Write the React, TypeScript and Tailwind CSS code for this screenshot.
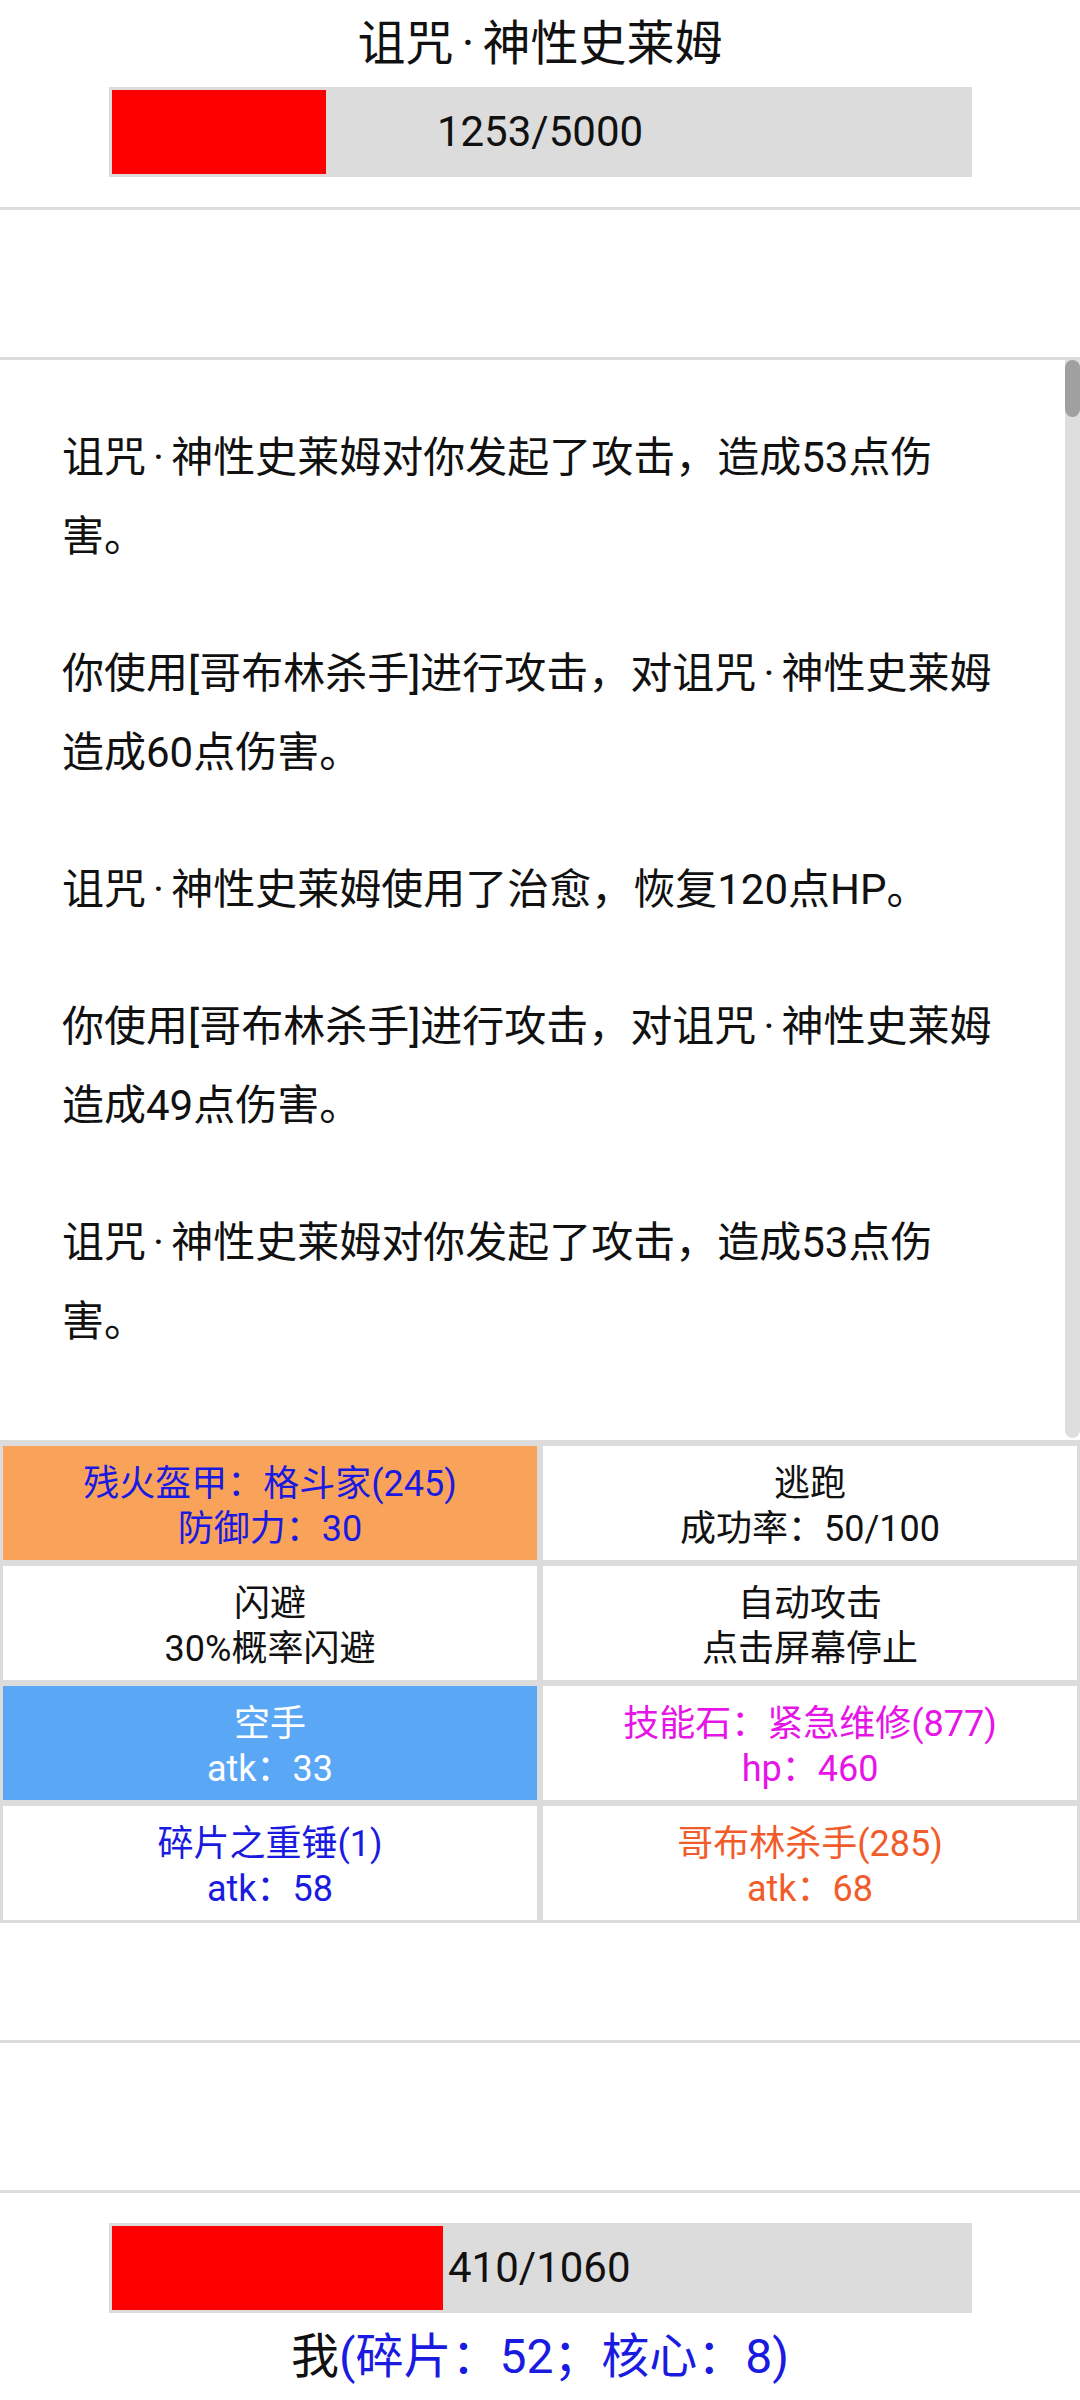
import React from "react";

function Dot() {
  return <span className="inline-block w-[0.6em] text-center">·</span>;
}

const NAME = (
  <>
    诅咒
    <Dot />
    神性史莱姆
  </>
);

const logs: React.ReactNode[] = [
  <>
    {NAME}对你发起了攻击，造成53点伤
    <br />
    害。
  </>,
  <>你使用[哥布林杀手]进行攻击，对{NAME}造成60点伤害。</>,
  <>{NAME}使用了治愈，恢复120点HP。</>,
  <>你使用[哥布林杀手]进行攻击，对{NAME}造成49点伤害。</>,
  <>
    {NAME}对你发起了攻击，造成53点伤
    <br />
    害。
  </>,
];

type Cell = { l1: string; l2: string; bg: string; fg: string };

const cells: Cell[] = [
  { l1: "残火盔甲：格斗家(245)", l2: "防御力：30", bg: "bg-[#f9a35a]", fg: "text-[#1a1ae0]" },
  { l1: "逃跑", l2: "成功率：50/100", bg: "bg-white", fg: "text-[#111]" },
  { l1: "闪避", l2: "30%概率闪避", bg: "bg-white", fg: "text-[#111]" },
  { l1: "自动攻击", l2: "点击屏幕停止", bg: "bg-white", fg: "text-[#111]" },
  { l1: "空手", l2: "atk：33", bg: "bg-[#5aa8f5]", fg: "text-white" },
  { l1: "技能石：紧急维修(877)", l2: "hp：460", bg: "bg-white", fg: "text-[#e614e6]" },
  { l1: "碎片之重锤(1)", l2: "atk：58", bg: "bg-white", fg: "text-[#1a1ae0]" },
  { l1: "哥布林杀手(285)", l2: "atk：68", bg: "bg-white", fg: "text-[#f25c2a]" },
];

function Line() {
  return <div className="h-[3px] w-full bg-[#dcdcdc] shrink-0" />;
}

export default function App() {
  const enemyHp = 1253;
  const enemyMax = 5000;
  const myHp = 410;
  const myMax = 1060;
  return (
    <div className="w-[1080px] h-[2400px] bg-white flex flex-col overflow-hidden text-[#111] font-['Roboto','Noto_Sans_CJK_SC',sans-serif]">
      {/* header */}
      <div className="h-[207px] flex flex-col items-center shrink-0">
        <div className="h-[87px] flex items-center justify-center text-[48px] leading-none">
          {NAME}
        </div>
        <div className="relative w-[863px] h-[90px] bg-[#dcdcdc] p-[3px]">
          <div
            className="h-full bg-[#ff0000]"
            style={{ width: `${(enemyHp / enemyMax) * 100}%` }}
          />
          <div className="absolute inset-0 flex items-center justify-center text-[42px] leading-none">
            {enemyHp}/{enemyMax}
          </div>
        </div>
      </div>
      <Line />
      <div className="h-[147px] shrink-0" />
      <Line />

      {/* log */}
      <div className="h-[1080px] flex overflow-hidden shrink-0">
        <div className="flex-1 px-[62px] pt-[58px] flex flex-col gap-[58px] text-[42px] leading-[79px] overflow-hidden">
          {logs.map((t, i) => (
            <p key={i}>{t}</p>
          ))}
        </div>
        <div className="w-[15px] h-[1078px] bg-[#dedede] rounded-b-[8px] flex flex-col">
          <div className="h-[57px] bg-[#a0a0a0] rounded-full" />
        </div>
      </div>
      <Line />

      {/* grid */}
      <div className="grid grid-cols-2 shrink-0">
        {cells.map((c, i) => (
          <div
            key={i}
            className={`h-[120px] border-[3px] border-[#dcdcdc] pt-[8px] flex flex-col items-center justify-center text-[36px] leading-[45px] ${c.bg} ${c.fg}`}
          >
            <div>{c.l1}</div>
            <div>{c.l2}</div>
          </div>
        ))}
      </div>

      <div className="h-[117px] shrink-0" />
      <Line />
      <div className="h-[147px] shrink-0" />
      <Line />

      {/* footer */}
      <div className="pt-[30px] flex flex-col items-center shrink-0">
        <div className="w-[863px] h-[90px] bg-[#dcdcdc] p-[3px] flex items-center">
          <div
            className="h-full bg-[#ff0000] shrink-0"
            style={{ width: `${(myHp / myMax) * 857}px` }}
          />
          <div className="pl-[5px] text-[42px] leading-none">
            {myHp}/{myMax}
          </div>
        </div>
        <div className="h-[87px] flex items-center justify-center text-[48px] leading-none">
          <span>我</span>
          <span className="text-[#1a1ae0]">(碎片：52；核心：8)</span>
        </div>
      </div>
    </div>
  );
}
